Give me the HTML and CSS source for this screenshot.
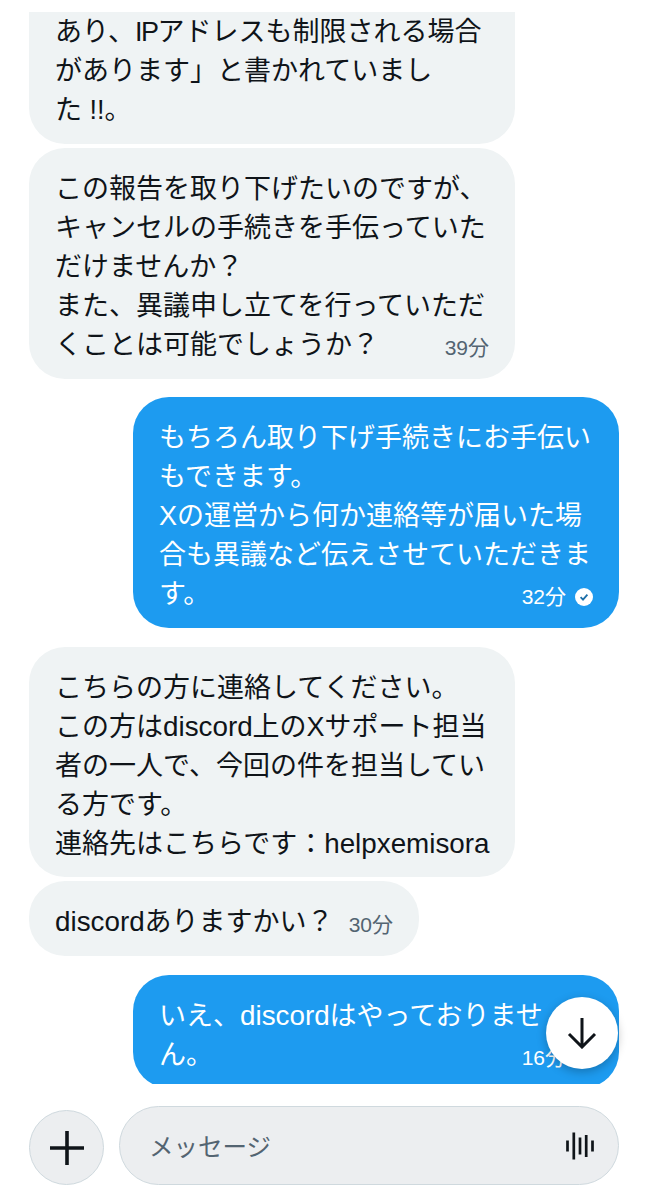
FILE: index.html
```html
<!DOCTYPE html>
<html lang="ja">
  <head>
    <meta charset="utf-8">
    <title>メッセージ</title>
    <link rel="stylesheet" href="styles.css">
  </head>
  <body>
    <main class="chat">
      <section class="messages">
        <div class="bubble them cut-top">
          あり、<span class="ip">IP</span>アドレスも制限される場合<br>
          があります」と書かれていまし<br>
          た !!。
        </div>
        <div class="bubble them">
          この報告を取り下げたいのですが、<br>
          キャンセルの手続きを手伝っていた<br>
          だけませんか？<br>
          また、異議申し立てを行っていただ
          <div class="last-line">
            <span>くことは可能でしょうか？</span>
            <span class="time">39分</span>
          </div>
        </div>
        <div class="bubble me gap-top">
          もちろん取り下げ手続きにお手伝い<br>
          もできます。<br>
          Xの運営から何か連絡等が届いた場<br>
          合も異議など伝えさせていただきま
          <div class="last-line">
            <span>す。</span>
            <span class="time">32分
              <svg class="read" viewBox="0 0 18 18" width="18" height="18">
                <circle cx="9" cy="9" r="9" fill="#fff"/>
                <path d="M5.600 9.200l2.400 2.400 4.400-5" fill="none" stroke="#1d6fa8" stroke-width="1.800"/>
              </svg>
            </span>
          </div>
        </div>
        <div class="bubble them gap-top">
          こちらの方に連絡してください。<br>
          この方は<span class="en">discord</span>上のXサポート担当<br>
          者の一人で、今回の件を担当してい<br>
          る方です。<br>
          連絡先はこちらです：<span class="en">helpxemisora</span>
        </div>
        <div class="bubble them short">
          <div class="last-line">
            <span><span class="en">discord</span>ありますかい？</span>
            <span class="time">30分</span>
          </div>
        </div>
        <div class="bubble me gap-top">
          いえ、<span class="en">discord</span>はやっておりませ
          <div class="last-line">
            <span>ん。</span>
            <span class="time">16分
              <svg class="read" viewBox="0 0 18 18" width="18" height="18">
                <circle cx="9" cy="9" r="9" fill="#fff"/>
              </svg>
            </span>
          </div>
        </div>
        <button class="scroll-down" aria-label="下へ">
          <svg viewBox="0 0 32 32" width="32" height="32">
            <path d="M16 1v29M3 17l13 13 13-13" fill="none" stroke="#0f1419" stroke-width="3"/>
          </svg>
        </button>
      </section>

      <footer class="composer">
        <button class="add" aria-label="追加">
          <svg viewBox="0 0 36 36" width="36" height="36">
            <path d="M18 1v34M1 18h34" fill="none" stroke="#0f1419" stroke-width="3.600"/>
          </svg>
        </button>
        <div class="input">
          <span class="placeholder">メッセージ</span>
          <svg viewBox="0 0 28 28" width="28" height="28">
            <path d="M1.500 8.500v11M7.800 0.500v27M14 5.500v17M20.200 3v22M26.500 8.500v11" fill="none" stroke="#0f1419" stroke-width="2.700"/>
          </svg>
        </div>
      </footer>
    </main>
  </body>
</html>
```

FILE: styles.css
```css
body {
  margin: 0;
  background-color: #fff;
  color: #0f1419;
  font-family: "Liberation Sans", "Noto Sans CJK JP", sans-serif;
}

.chat {
  width: 648px;
  height: 1200px;
  padding-top: 12px;
  box-sizing: border-box;
}

.messages {
  position: relative;
  height: 1072px;
  padding: 0 29px;
  overflow: hidden;
  display: flex;
  flex-direction: column;
}

.bubble {
  flex: none;
  box-sizing: border-box;
  width: 486px;
  padding: 22px 26px 13.800px;
  margin-bottom: 4px;
  border-radius: 36px;
  font-size: 27px;
  line-height: 39px;
  white-space: nowrap;
}

.them {
  background-color: #eff3f4;
}

.me {
  align-self: flex-end;
  background-color: #1d9bf0;
  color: #fff;
}

.gap-top {
  margin-top: 14.500px;
}

.cut-top {
  padding-top: 1px;
  padding-bottom: 14px;
  border-radius: 0 0 36px 36px;
}

.short {
  width: 390px;
}

.en {
  font-size: 27.800px;
  line-height: 1;
}

.ip {
  letter-spacing: -1.500px;
}

.last-line {
  display: flex;
  justify-content: space-between;
  align-items: flex-end;
}

.time {
  display: flex;
  align-items: center;
  gap: 9px;
  font-size: 21px;
  line-height: 34px;
  color: #536471;
}

.me .time {
  color: #fff;
}

.scroll-down {
  position: absolute;
  right: 30px;
  top: 985px;
  width: 72px;
  height: 72px;
  padding: 0;
  border: 0;
  border-radius: 50%;
  background-color: #fff;
  box-shadow: 0 3px 10px rgba(0, 0, 0, 0.25);
  display: flex;
  align-items: center;
  justify-content: center;
}

.composer {
  display: flex;
  align-items: flex-end;
  gap: 15px;
  padding: 22px 29px 0;
}

.add {
  flex: none;
  width: 75px;
  height: 75px;
  padding: 0;
  border: 1.500px solid #cfd9de;
  border-radius: 50%;
  background-color: #eceef0;
  display: flex;
  align-items: center;
  justify-content: center;
}

.input {
  flex: 1;
  height: 79px;
  box-sizing: border-box;
  padding: 0 24px 0 29px;
  border: 1.500px solid #cfd9de;
  border-radius: 40px;
  background-color: #eceef0;
  display: flex;
  align-items: center;
  justify-content: space-between;
}

.placeholder {
  font-size: 24.500px;
  color: #536471;
}
```
